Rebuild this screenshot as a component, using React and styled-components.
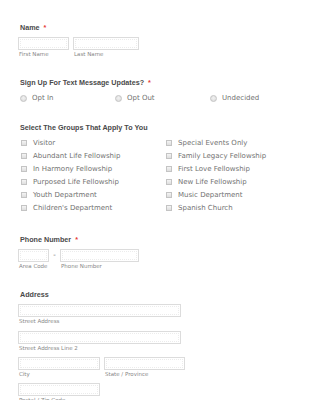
import styled, { createGlobalStyle } from "styled-components"

const Global = createGlobalStyle`
  body {
    margin: 0;
    background: #fff;
    font-family: "DejaVu Sans", Verdana, sans-serif;
  }
`

const groupsLeft = [
  "Visitor",
  "Abundant Life Fellowship",
  "In Harmony Fellowship",
  "Purposed Life Fellowship",
  "Youth Department",
  "Children's Department",
]
const groupsRight = [
  "Special Events Only",
  "Family Legacy Fellowship",
  "First Love Fellowship",
  "New Life Fellowship",
  "Music Department",
  "Spanish Church",
]

const App = () => {
  return (
    <Form>
      <Global />
      <Section $top={23}>
        <Heading>Name <Req>*</Req></Heading>
        <Row $top={4}>
          <Field>
            <Input $w={51} />
            <Sub>First Name</Sub>
          </Field>
          <Field>
            <Input $w={66} />
            <Sub>Last Name</Sub>
          </Field>
        </Row>
      </Section>

      <Section $top={20}>
        <Heading>Sign Up For Text Message Updates? <Req>*</Req></Heading>
        <Radios>
          {["Opt In", "Opt Out", "Undecided"].map(o => (
            <Option key={o}>
              <Radio />
              {o}
            </Option>
          ))}
        </Radios>
      </Section>

      <Section $top={20}>
        <Heading>Select The Groups That Apply To You</Heading>
        <Checks>
          <Col>
            {groupsLeft.map(g => (
              <CheckRow key={g}>
                <Box />
                {g}
              </CheckRow>
            ))}
          </Col>
          <Col>
            {groupsRight.map(g => (
              <CheckRow key={g}>
                <Box />
                {g}
              </CheckRow>
            ))}
          </Col>
        </Checks>
      </Section>

      <Section $top={21}>
        <Heading>Phone Number <Req>*</Req></Heading>
        <Row $top={4}>
          <Field>
            <Input $w={31} />
            <Sub>Area Code</Sub>
          </Field>
          <Dash>-</Dash>
          <Field>
            <Input $w={79} />
            <Sub>Phone Number</Sub>
          </Field>
        </Row>
      </Section>

      <Section $top={20}>
        <Heading>Address</Heading>
        <Row $top={4}>
          <Field>
            <Input $w={163} />
            <Sub>Street Address</Sub>
          </Field>
        </Row>
        <Row $top={6}>
          <Field>
            <Input $w={163} />
            <Sub>Street Address Line 2</Sub>
          </Field>
        </Row>
        <Row $top={5}>
          <Field>
            <Input $w={82} />
            <Sub>City</Sub>
          </Field>
          <Field>
            <Input $w={81} />
            <Sub>State / Province</Sub>
          </Field>
        </Row>
        <Row $top={5}>
          <Field>
            <Input $w={82} />
            <Sub>Postal / Zip Code</Sub>
          </Field>
        </Row>
      </Section>
    </Form>
  )
}

const Form = styled.div`
  padding: 0 18px;
  width: 325px;
  height: 400px;
  overflow: hidden;
  box-sizing: border-box;
  display: flex;
  flex-direction: column;
`

const Section = styled.div`
  margin-top: ${props => props.$top}px;
  display: flex;
  flex-direction: column;
`

const Heading = styled.div`
  font-family: "Liberation Sans", Arial, sans-serif;
  font-size: 7.2px;
  font-weight: 700;
  line-height: 10px;
  height: 10px;
  color: #4a4a4a;
  padding-left: 2px;
`

const Req = styled.span`
  color: #e53935;
  margin-left: 2px;
`

const Row = styled.div`
  display: flex;
  align-items: flex-start;
  gap: 4px;
  margin-top: ${props => props.$top}px;
`

const Field = styled.div`
  display: flex;
  flex-direction: column;
`

const Input = styled.div`
  width: ${props => props.$w}px;
  height: 13px;
  box-sizing: border-box;
  border: 1px solid #dcdcdc;
  outline: 1px dotted #ececec;
  outline-offset: -3px;
  background: #fff;
`

const Sub = styled.div`
  font-size: 5.5px;
  line-height: 8px;
  height: 8px;
  color: #888;
  padding-left: 1px;
  white-space: nowrap;
`

const Dash = styled.div`
  font-size: 7px;
  color: #666;
  line-height: 13px;
  width: 3px;
  text-align: center;
`

const Radios = styled.div`
  display: grid;
  grid-template-columns: 95px 95px 95px;
  margin-top: 5px;
  padding-left: 2px;
`

const Option = styled.div`
  display: flex;
  align-items: center;
  height: 10px;
  font-size: 7px;
  color: #727272;
`

const Radio = styled.span`
  width: 7px;
  height: 7px;
  border-radius: 50%;
  box-sizing: border-box;
  border: 1px solid #c4c4c4;
  background: radial-gradient(circle at 50% 40%, #f2f2f2, #d8d8d8);
  margin-right: 5px;
  flex: none;
`

const Checks = styled.div`
  display: grid;
  grid-template-columns: 145px 145px;
  margin-top: 3px;
  padding-left: 2px;
`

const Col = styled.div`
  display: flex;
  flex-direction: column;
`

const CheckRow = styled.div`
  display: flex;
  align-items: center;
  height: 13px;
  font-size: 7px;
  color: #727272;
  white-space: nowrap;
`

const Box = styled.span`
  width: 6px;
  height: 6px;
  box-sizing: border-box;
  border: 1px solid #c4c4c4;
  background: linear-gradient(#f4f4f4, #dedede);
  margin-right: 6px;
  margin-left: 1px;
  flex: none;
`

export default App
